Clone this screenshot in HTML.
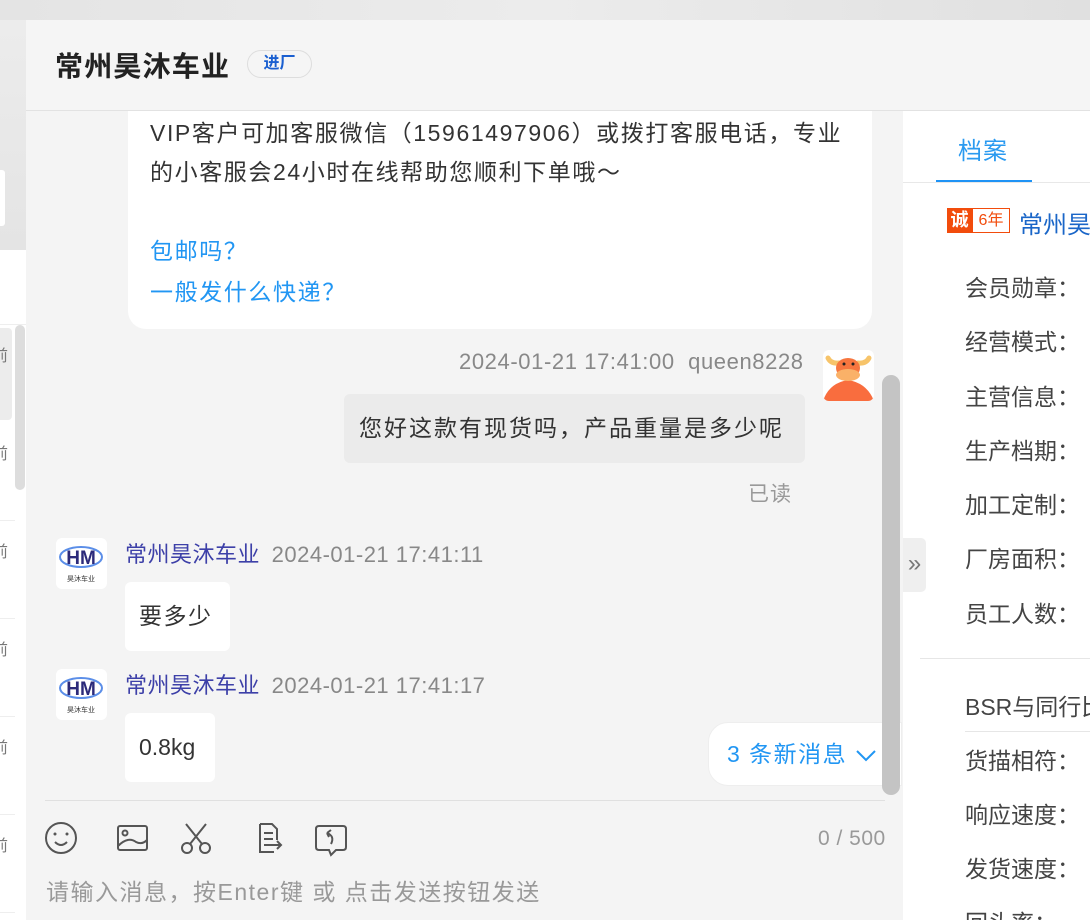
<!DOCTYPE html>
<html><head><meta charset="utf-8"><style>
*{margin:0;padding:0;box-sizing:border-box}
html,body{width:1090px;height:920px;overflow:hidden}
body{position:relative;background:#f4f4f4;font-family:"Liberation Sans","Noto Sans CJK SC",sans-serif;color:#333}
.a{position:absolute}
.t{white-space:nowrap}
</style></head><body>
<div class="a" style="left:0;top:0;width:1090px;height:20px;background:linear-gradient(90deg,#e4e4e4,#ececec,#e0e0e0)"></div>
<!-- left sidebar -->
<div class="a" style="left:0;top:20px;width:26px;height:900px;background:#fff;overflow:hidden">
<div class="a" style="left:0;top:0;width:26px;height:230px;background:linear-gradient(#ececec,#e4e4e4)"></div>
<div class="a" style="left:0;top:150px;width:5px;height:56px;background:#fff;border-radius:0 3px 3px 0"></div>
<div class="a" style="left:0;top:304px;width:26px;border-top:1px solid #eee"></div>
<div class="a" style="left:0;top:308px;width:12px;height:92px;background:#ececec;border-radius:0 4px 4px 0"></div>
<div class="a" style="left:15px;top:305px;width:10px;height:165px;background:#ddd;border-radius:5px"></div>
<div class="a t" style="left:-8px;top:322px;font-size:16px;color:#777">前</div>
<div class="a t" style="left:-8px;top:420px;font-size:16px;color:#777">前</div>
<div class="a t" style="left:-8px;top:518px;font-size:16px;color:#777">前</div>
<div class="a t" style="left:-8px;top:616px;font-size:16px;color:#777">前</div>
<div class="a t" style="left:-8px;top:714px;font-size:16px;color:#777">前</div>
<div class="a t" style="left:-8px;top:812px;font-size:16px;color:#777">前</div>
<div class="a" style="left:0;top:500px;width:15px;border-top:1px solid #eee"></div>
<div class="a" style="left:0;top:598px;width:15px;border-top:1px solid #eee"></div>
<div class="a" style="left:0;top:696px;width:15px;border-top:1px solid #eee"></div>
<div class="a" style="left:0;top:794px;width:15px;border-top:1px solid #eee"></div>
<div class="a" style="left:0;top:892px;width:15px;border-top:1px solid #eee"></div>
</div>
<!-- right panel -->
<div class="a" style="left:903px;top:111px;width:187px;height:809px;background:#fff;overflow:hidden">
<div class="a t" style="left:55px;top:20px;font-size:24px;color:#2a9af0;letter-spacing:1px">档案</div>
<div class="a" style="left:33px;top:69px;width:96px;height:3px;background:#1f93f5"></div>
<div class="a" style="left:0;top:71px;width:187px;border-top:1px solid #e8e8e8"></div>
<div class="a" style="left:44px;top:97px;width:25px;height:25px;background:#f24c0c;color:#fff;font-size:18px;font-weight:bold;line-height:25px;text-align:center">诚</div>
<div class="a t" style="left:69px;top:97px;width:38px;height:25px;border:1px solid #f24c0c;color:#f24c0c;font-size:16px;line-height:23px;text-align:center">6年</div>
<div class="a t" style="left:116px;top:94px;font-size:24px;color:#1a66c8">常州昊沐车业</div>
<div class="a" style="left:62px;top:150px;font-size:23px;color:#444;line-height:54.3px;white-space:nowrap">会员勋章：<br>经营模式：<br>主营信息：<br>生产档期：<br>加工定制：<br>厂房面积：<br>员工人数：</div>
<div class="a" style="left:17px;top:547px;width:170px;border-top:1px solid #e6e6e6"></div>
<div class="a t" style="left:62px;top:577px;font-size:23px;color:#444">BSR与同行比较</div>
<div class="a" style="left:62px;top:620px;width:125px;border-top:1px solid #e6e6e6"></div>
<div class="a" style="left:62px;top:623px;font-size:23px;color:#444;line-height:54px;white-space:nowrap">货描相符：<br>响应速度：<br>发货速度：<br>回头率：</div>
</div>
<div class="a" style="left:903px;top:538px;width:23px;height:54px;background:#efefef;border-radius:0 5px 5px 0;color:#777;font-size:24px;line-height:52px;text-align:center">»</div>
<!-- bubble top -->
<div class="a" style="left:128px;top:100px;width:744px;height:229px;background:#fff;border-radius:0 0 18px 18px"></div>
<div class="a" style="left:150px;top:114px;font-size:23px;letter-spacing:1.6px;line-height:39px;color:#333;white-space:nowrap">VIP客户可加客服微信（15961497906）或拨打客服电话，专业<br>的小客服会24小时在线帮助您顺利下单哦～</div>
<div class="a" style="left:150px;top:231px;font-size:23px;letter-spacing:1.6px;line-height:41px;color:#2196f3;white-space:nowrap">包邮吗？<br>一般发什么快递？</div>
<!-- header -->
<div class="a" style="left:26px;top:20px;width:1064px;height:91px;background:#f5f5f5;border-bottom:1px solid #e2e2e2"></div>
<div class="a t" style="left:55px;top:45px;font-size:28px;letter-spacing:1.2px;font-weight:bold;color:#222">常州昊沐车业</div>
<div class="a t" style="left:247px;top:50px;width:65px;height:28px;border:1px solid #ddd;border-radius:14px;font-size:16px;font-weight:bold;color:#1a5fd0;text-align:center;line-height:26px">进厂</div>
<!-- my message -->
<div class="a t" style="left:459px;top:349px;font-size:22px;letter-spacing:0.6px;color:#888">2024-01-21 17:41:00&nbsp;&nbsp;queen8228</div>
<div class="a" style="left:823px;top:350px;width:51px;height:51px;background:#fff;border-radius:6px;overflow:hidden">
<svg width="51" height="51" viewBox="0 0 51 51"><path d="M5 8 Q8 14 16 13" stroke="#f7c46a" stroke-width="5" fill="none" stroke-linecap="round"/><path d="M46 8 Q43 14 35 13" stroke="#f7c46a" stroke-width="5" fill="none" stroke-linecap="round"/><path d="M0 51 Q6 33 25 30 Q44 33 51 51Z" fill="#f96d3e"/><ellipse cx="25" cy="18" rx="12" ry="10" fill="#f7763f"/><ellipse cx="25" cy="25" rx="12" ry="6" fill="#fab168"/><circle cx="21" cy="14" r="1.5" fill="#222"/><circle cx="30" cy="14" r="1.5" fill="#222"/></svg></div>
<div class="a t" style="left:344px;top:394px;width:461px;height:69px;background:#ebebeb;border-radius:6px;font-size:23px;letter-spacing:2px;line-height:69px;padding-left:15px;color:#333">您好这款有现货吗，产品重量是多少呢</div>
<div class="a t" style="left:748px;top:478px;font-size:21px;color:#999;letter-spacing:1px">已读</div>
<!-- their messages -->
<div class="a" style="left:56px;top:538px;width:51px;height:51px;background:#fff;border-radius:6px"><svg width="51" height="51"><ellipse cx="25" cy="19" rx="21" ry="10" fill="none" stroke="#5b8ee8" stroke-width="2"/><text x="25" y="26" font-size="19" font-weight="bold" fill="#2c2a7a" text-anchor="middle" font-family="Liberation Sans">HM</text><text x="25" y="43" font-size="7" fill="#333" text-anchor="middle" font-family="Noto Sans CJK SC">昊沐车业</text></svg></div>
<div class="a t" style="left:125px;top:537px;font-size:22px;letter-spacing:0.5px;color:#3d40a8">常州昊沐车业 <span style="color:#888;margin-left:5px">2024-01-21 17:41:11</span></div>
<div class="a t" style="left:125px;top:582px;width:105px;height:69px;background:#fff;border-radius:6px;font-size:23px;letter-spacing:1.5px;line-height:69px;padding-left:14px">要多少</div>
<div class="a" style="left:56px;top:669px;width:51px;height:51px;background:#fff;border-radius:6px"><svg width="51" height="51"><ellipse cx="25" cy="19" rx="21" ry="10" fill="none" stroke="#5b8ee8" stroke-width="2"/><text x="25" y="26" font-size="19" font-weight="bold" fill="#2c2a7a" text-anchor="middle" font-family="Liberation Sans">HM</text><text x="25" y="43" font-size="7" fill="#333" text-anchor="middle" font-family="Noto Sans CJK SC">昊沐车业</text></svg></div>
<div class="a t" style="left:125px;top:668px;font-size:22px;letter-spacing:0.5px;color:#3d40a8">常州昊沐车业 <span style="color:#888;margin-left:5px">2024-01-21 17:41:17</span></div>
<div class="a t" style="left:125px;top:713px;width:90px;height:69px;background:#fff;border-radius:6px;font-size:23px;line-height:69px;padding-left:14px">0.8kg</div>
<!-- new msgs -->
<div class="a t" style="left:708px;top:722px;width:194px;height:64px;background:#fff;border:1px solid #eee;border-radius:20px 0 0 20px;font-size:23px;letter-spacing:1.5px;color:#2196f3;line-height:62px;padding-left:18px;overflow:hidden">3 条新消息 <svg width="22" height="14" style="vertical-align:middle"><path d="M2 2 L11 11 L20 2" stroke="#2196f3" stroke-width="2" fill="none"/></svg></div>
<div class="a" style="left:882px;top:375px;width:18px;height:420px;background:#c4c4c4;border-radius:9px"></div>
<!-- input -->
<div class="a" style="left:45px;top:800px;width:840px;border-top:1px solid #e0e0e0"></div>
<svg class="a" style="left:44px;top:820px" width="310" height="38" fill="none" stroke="#555" stroke-width="2">
<circle cx="17" cy="18" r="15"/><circle cx="11" cy="14" r="1.5" fill="#555" stroke="none"/><circle cx="23" cy="14" r="1.5" fill="#555" stroke="none"/><path d="M11 22 Q17 28 23 22"/>
<rect x="74" y="6" width="29" height="24" rx="2"/><circle cx="81" cy="13" r="2.5"/><path d="M74 26 Q84 16 92 22 Q98 25 103 20"/>
<circle cx="143" cy="28" r="5"/><circle cx="161" cy="28" r="5"/><path d="M146 24 L162 4 M158 24 L142 4"/>
<path d="M216 4 L228 4 L233 9 L233 20 M216 4 L216 32 L230 32 M220 13 L229 13 M220 19 L229 19 M220 25 L237 25 M233 21 L237 25 L233 29"/>
<path d="M275 6 L299 6 Q302 6 302 9 L302 27 Q302 30 299 30 L292 30 L287 35 L285 30 L275 30 Q272 30 272 27 L272 9 Q272 6 275 6Z"/><path d="M287 24 Q291 16 283 13 M283 13 L287 10 M283 13 L285 17"/>
</svg>
<div class="a t" style="left:818px;top:827px;font-size:21px;letter-spacing:0.5px;color:#999">0 / 500</div>
<div class="a t" style="left:46px;top:873px;font-size:23px;letter-spacing:1.5px;color:#999">请输入消息，按Enter键 或 点击发送按钮发送</div>
</body></html>
